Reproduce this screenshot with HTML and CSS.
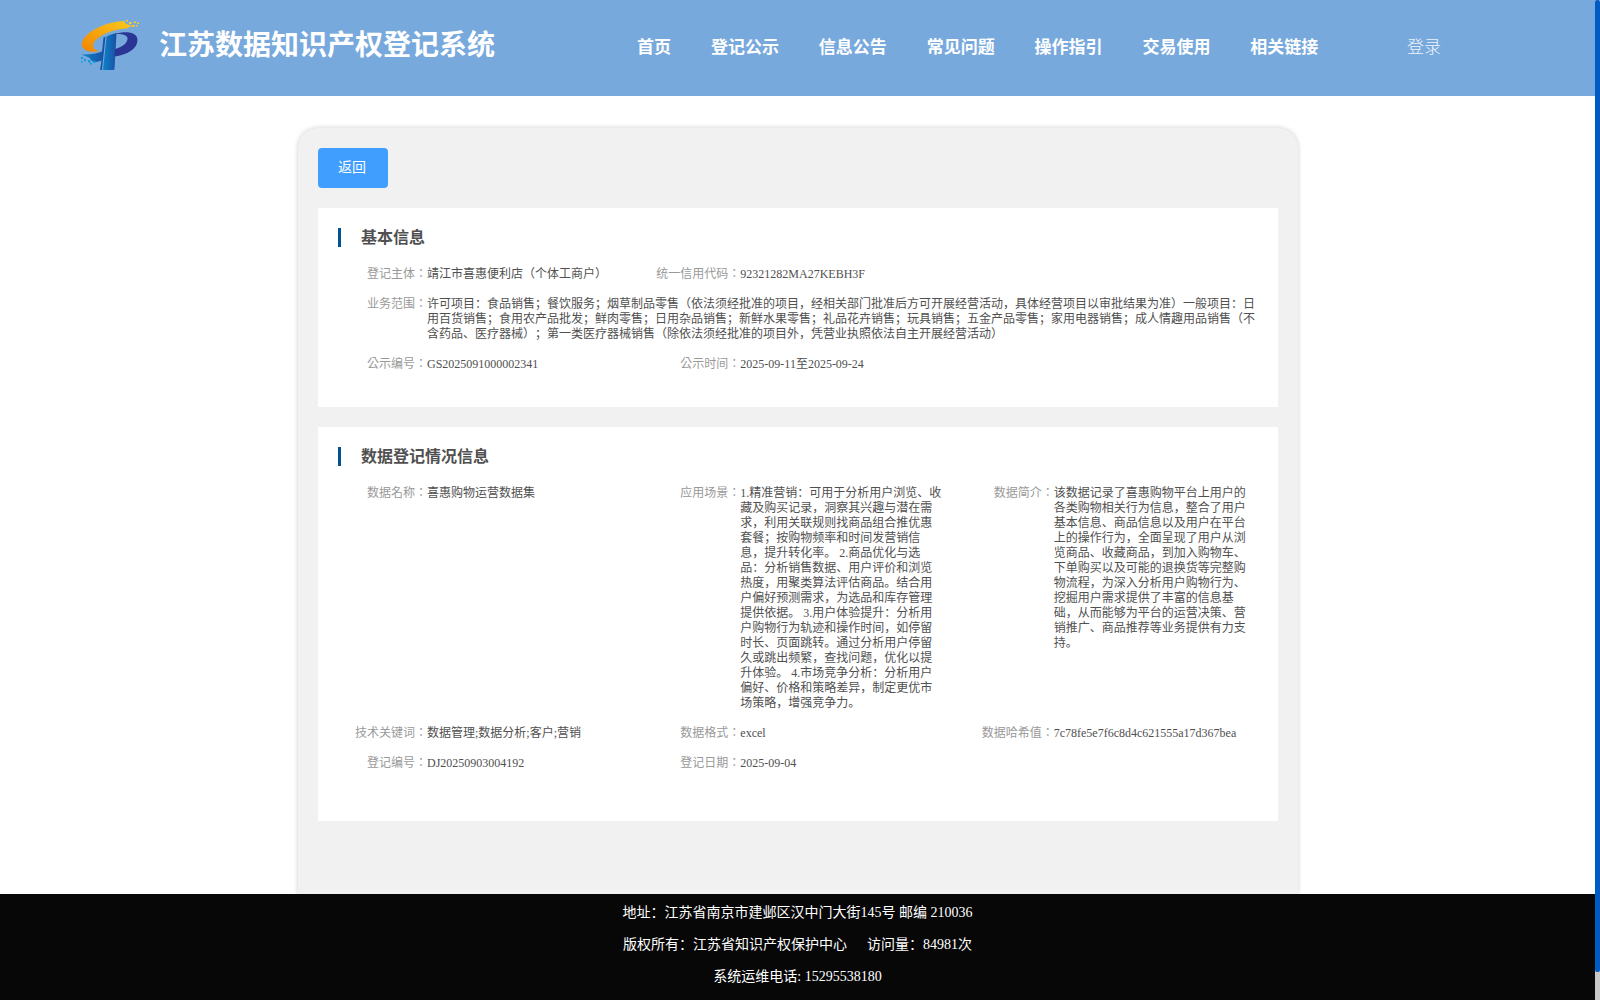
FILE: index.html
```html
<!DOCTYPE html>
<html lang="zh-CN">
<head>
<meta charset="utf-8">
<title>江苏数据知识产权登记系统</title>
<link rel="stylesheet" href="styles.css">
</head>
<body>
<div class="page">
  <header class="header">
    <svg class="logo" viewBox="0 0 60 52" width="60" height="52">
      <defs>
        <linearGradient id="gold" x1="0" y1="1" x2="1" y2="0"><stop offset="0" stop-color="#f08300"/><stop offset="1" stop-color="#fccb1c"/></linearGradient>
        <linearGradient id="blue" x1="0" y1="0" x2="1" y2="0"><stop offset="0" stop-color="#0b83c8"/><stop offset="1" stop-color="#1b4fa3"/></linearGradient>
      </defs>
      <path fill="url(#gold)" d="M44 2C25 3 3.500 13 1.800 25C1.500 30 7 34 19 32.500C11.500 29.500 11.500 25 17 20C24 14 35 10 47 9.500L52 6.500L46 5Z"/>
      <path fill="url(#blue)" d="M1.500 35.500Q14 36 22 32.500L23.500 18.500L25.500 17.500L22 51H20L21.500 41.500Q16 44 12 42L9 38.500Z"/>
      <path fill="url(#blue)" d="M26.500 17.500Q31 15 36.500 14L34.500 50.500L33 51H23Z"/>
      <path fill="#2b3694" d="M35 15C46 11.500 57.500 13 57.500 21C57.500 30 47 36 34.500 37.500L35 30C42 28 48 24 47.500 19C47 15.500 41 14.500 35 15Z"/>
      <g fill="#fccb1c"><path d="M46 1h2v1.500h-2zM49 3h2.500v2H49zM54 2.500h2v1.500h-2zM52 6h2.500v2H52zM57 3.500h2V5h-2zM56 6h1.500v1.500H56z"/></g>
      <g fill="#159bd7"><path d="M1 38h2v2H1zM4 40h2v2H4zM8 41h2.500v2.500H8zM1 42h1.500v1.500H1zM10 44h2v1.500h-2zM13 42h2.500v2H13z"/></g>
    </svg>
    <h1 class="brand">江苏数据知识产权登记系统</h1>
    <nav class="nav">
      <a>首页</a><a>登记公示</a><a>信息公告</a><a>常见问题</a><a>操作指引</a><a>交易使用</a><a>相关链接</a>
    </nav>
    <a class="login">登录</a>
  </header>

  <main class="container">
    <button class="back">返回</button>

    <section class="panel basic">
      <h2>基本信息</h2>
      <dl class="fields">
        <div class="field"><dt lang="zh-TW">登记主体：</dt><dd>靖江市喜惠便利店（个体工商户）</dd></div>
        <div class="field double"><dt lang="zh-TW">统一信用代码：</dt><dd>92321282MA27KEBH3F</dd></div>
        <div class="field full"><dt lang="zh-TW">业务范围：</dt><dd>许可项目：食品销售；餐饮服务；烟草制品零售（依法须经批准的项目，经相关部门批准后方可开展经营活动，具体经营项目以审批结果为准）一般项目：日用百货销售；食用农产品批发；鲜肉零售；日用杂品销售；新鲜水果零售；礼品花卉销售；玩具销售；五金产品零售；家用电器销售；成人情趣用品销售（不含药品、医疗器械）；第一类医疗器械销售（除依法须经批准的项目外，凭营业执照依法自主开展经营活动）</dd></div>
        <div class="field"><dt lang="zh-TW">公示编号：</dt><dd>GS2025091000002341</dd></div>
        <div class="field double"><dt lang="zh-TW">公示时间：</dt><dd>2025-09-11至2025-09-24</dd></div>
      </dl>
    </section>

    <section class="panel detail">
      <h2>数据登记情况信息</h2>
      <dl class="fields">
        <div class="field"><dt lang="zh-TW">数据名称：</dt><dd>喜惠购物运营数据集</dd></div>
        <div class="field"><dt lang="zh-TW">应用场景：</dt><dd>1.精准营销：可用于分析用户浏览、收藏及购买记录，洞察其兴趣与潜在需求，利用关联规则找商品组合推优惠套餐；按购物频率和时间发营销信息，提升转化率。 2.商品优化与选品：分析销售数据、用户评价和浏览热度，用聚类算法评估商品。结合用户偏好预测需求，为选品和库存管理提供依据。 3.用户体验提升：分析用户购物行为轨迹和操作时间，如停留时长、页面跳转。通过分析用户停留久或跳出频繁，查找问题，优化以提升体验。 4.市场竞争分析：分析用户偏好、价格和策略差异，制定更优市场策略，增强竞争力。</dd></div>
        <div class="field"><dt lang="zh-TW">数据简介：</dt><dd>该数据记录了喜惠购物平台上用户的各类购物相关行为信息，整合了用户基本信息、商品信息以及用户在平台上的操作行为，全面呈现了用户从浏览商品、收藏商品，到加入购物车、下单购买以及可能的退换货等完整购物流程，为深入分析用户购物行为、挖掘用户需求提供了丰富的信息基础，从而能够为平台的运营决策、营销推广、商品推荐等业务提供有力支持。</dd></div>
        <div class="field"><dt lang="zh-TW">技术关键词：</dt><dd>数据管理;数据分析;客户;营销</dd></div>
        <div class="field"><dt lang="zh-TW">数据格式：</dt><dd>excel</dd></div>
        <div class="field"><dt lang="zh-TW">数据哈希值：</dt><dd>7c78fe5e7f6c8d4c621555a17d367bea</dd></div>
        <div class="field"><dt lang="zh-TW">登记编号：</dt><dd>DJ20250903004192</dd></div>
        <div class="field"><dt lang="zh-TW">登记日期：</dt><dd>2025-09-04</dd></div>
      </dl>
    </section>
  </main>

  <footer class="footer">
    <p>地址：江苏省南京市建邺区汉中门大街145号 邮编 210036</p>
    <p>版权所有：江苏省知识产权保护中心<span class="visits">访问量：84981次</span></p>
    <p>系统运维电话: 15295538180</p>
  </footer>
</div>
<div class="scrollbar"><div class="thumb"></div></div>
</body>
</html>
```

FILE: styles.css
```css
* { box-sizing: border-box; margin: 0; padding: 0; }

body {
  display: flex;
  height: 1000px;
  overflow: hidden;
  background: #fff;
  font-family: "Liberation Serif", "Noto Sans CJK SC", serif;
  text-spacing-trim: space-all;
  text-autospace: no-autospace;
}

.page { width: 1595px; height: 1000px; display: flex; flex-direction: column; }

.header {
  flex: none;
  display: flex;
  height: 96px;
  padding-left: 80px;
  background: #78a9dd;
  color: #fff;
}
.logo { flex: none; margin-top: 19px; }
.brand { flex: none; width: 497px; padding-left: 19px; font-size: 28px; line-height: 92px; white-space: nowrap; font-weight: 600; }
.nav { flex: none; display: flex; gap: 39.9px; width: 751px; font-size: 17px; font-weight: 600; line-height: 96px; white-space: nowrap; }
.login { font-size: 17px; line-height: 96px; font-weight: 300; margin-left: 19px; color: #edf4fb; }

.container {
  flex: 1;
  width: 1000px;
  min-height: 0;
  margin: 32px 0 0 298px;
  padding: 20px;
  background: #f1f1f1;
  border-radius: 20px 20px 0 0;
  box-shadow: 0 0 5px rgba(0, 0, 0, .2);
}

.back {
  display: block;
  width: 70px;
  height: 40px;
  border: 0;
  border-radius: 4px;
  background: #409eff;
  color: #fff;
  font: 14px/40px "Liberation Serif", "Noto Sans CJK SC", serif;
  text-align: center;
  padding-right: 2px;
}

.panel { margin-top: 20px; padding: 20px 20px 0 0; background: #fff; color: #505050; }
.basic { height: 199px; }
.detail { height: 394px; }
.panel h2 {
  height: 19px;
  margin-left: 20px;
  padding-left: 20px;
  border-left: 3px solid #005294;
  font-size: 16px;
  line-height: 19px;
}

.fields {
  display: grid;
  grid-template-columns: repeat(3, 1fr);
  row-gap: 15px;
  margin: 20px 1px 0 -1px;
  font-size: 12px;
  line-height: 15px;
}
.field { display: grid; grid-template-columns: 110px 1fr; }
.double { grid-column: span 2; }
.full { grid-column: span 3; }
.fields dt { text-align: right; color: #999; white-space: nowrap; }

.footer {
  position: relative;
  flex: none;
  height: 106px;
  padding-top: 3px;
  background: #070707;
  color: #fff;
  font-size: 14px;
  line-height: 32px;
  text-align: center;
}
.visits { margin-left: 20px; }

.scrollbar { width: 5px; height: 1000px; background: #c8c8c8; }
.thumb { height: 972px; background: #005bc5; border-radius: 2px; }
```
